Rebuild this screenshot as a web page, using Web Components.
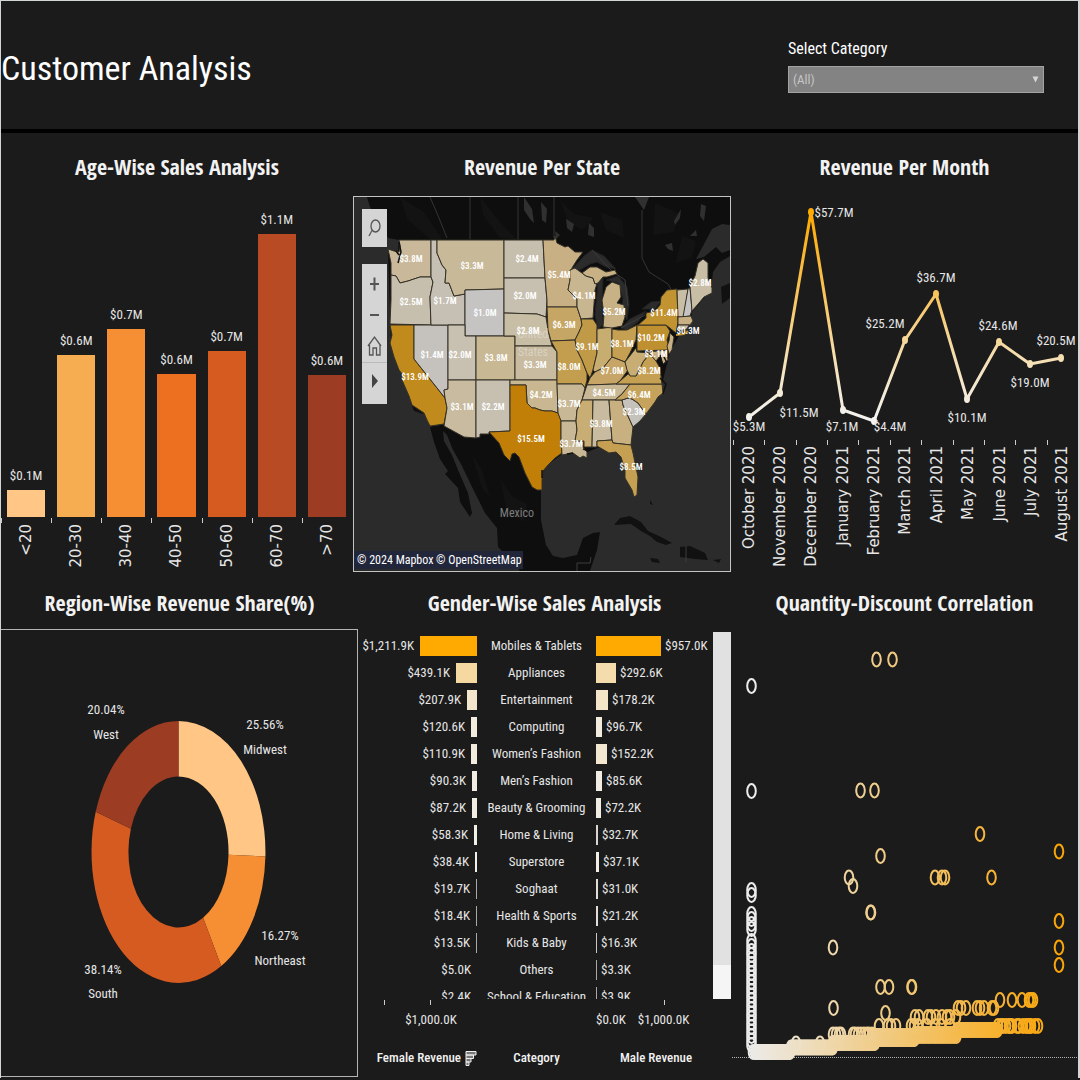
<!DOCTYPE html>
<html lang="en">
<head>
<meta charset="utf-8">
<title>Customer Analysis</title>
<style>
  body { margin: 0; background: #1b1b1b; color: #e6e6e6; font-family: "Roboto Condensed", Roboto, sans-serif; font-size: 13px; line-height: 18px; }
</style>
</head>
<body>
<customer-dashboard></customer-dashboard>

<script>
const SVG_OPEN = (box, label) => `<svg viewBox="${box}" role="img" aria-label="${label}">`;

class BaseElement extends HTMLElement {
  connectedCallback() {
    if (this.shadowRoot) return;
    this.attachShadow({ mode: 'open' }).innerHTML =
      `<style>:host{display:block;min-width:0}*{box-sizing:border-box}svg{display:block;width:100%;height:auto}text{font-size:13px;fill:#e6e6e6}</style>` + this.render();
  }
}

/* Title bar with the category filter */
class CategoryFilter extends BaseElement {
  render() {
    return `<style>
      :host{width:256px}
      label{display:block;font-size:16px;line-height:22px;color:#fff;margin-bottom:6px}
      .box{position:relative}
      select{appearance:none;display:block;width:100%;height:27px;padding:0 4px;border:1px solid #a3a3a3;border-radius:0;background:#838383;color:#c6c6c6;font:inherit}
      svg{position:absolute;right:5px;top:10px;width:7px;height:7px;pointer-events:none}
    </style>
    <label for="category">Select Category</label>
    <div class="box"><select id="category"><option>(All)</option></select>
    <svg viewBox="0 0 7 7" aria-hidden="true"><path d="M0.5 0.5h6L3.5 6.5z" fill="#d6d6d6"/></svg></div>`;
  }
}
class DashboardHeader extends BaseElement {
  render() {
    return `<style>
      :host{border-bottom:4px solid #000}
      header{display:flex;justify-content:space-between;align-items:flex-start;height:128px;padding:37px 34px 0 0}
      h1{margin:0;padding-top:5px;font-size:34px;line-height:50px;font-weight:400;color:#fff}
    </style><header><h1><slot></slot></h1><category-filter></category-filter></header>`;
  }
}

class ChartPanel extends BaseElement {
  render() {
    return `<style>
      :host{display:flex;flex-direction:column}
      h2{margin:0;display:flex;align-items:center;justify-content:center;height:var(--title-height,63px);padding-top:2px;font-family:"Open Sans Condensed","Open Sans",sans-serif;font-size:22px;line-height:28px;font-weight:500;color:#f2f2f2}
    </style><h2>${this.getAttribute('heading')}</h2><slot></slot>`;
  }
}

/* Row of upright category names under a chart */
class CategoryAxis extends BaseElement {
  render() {
    const names = this.getAttribute('names').split('|');
    return `<style>
      :host{display:flex}
      div{flex:1;display:flex;justify-content:center;position:relative;padding-top:6px;height:130px}
      div::before{content:"";position:absolute;left:0;top:0;height:5px;width:1px;background:#ccc}
      span{writing-mode:vertical-rl;transform:rotate(180deg);font-family:"DejaVu Sans",sans-serif;font-size:15px;line-height:18px;height:max-content;white-space:nowrap}
      :host([short]) div{height:54px}
    </style>` + names.map(n => `<div><span>${n.replace('<', '&lt;').replace('>', '&gt;')}</span></div>`).join('');
  }
}

class AgeBars extends BaseElement {
  render() {
    const bars = [['$0.1M', 27, '#ffc685'], ['$0.6M', 162, '#f6ad52'], ['$0.7M', 188, '#f68f33'], ['$0.6M', 143, '#ec7020'], ['$0.7M', 166, '#d55b21'], ['$1.1M', 283, '#b84a24'], ['$0.6M', 142, '#9c3c22']];
    return `<style>
      .plot{display:flex;height:321px;align-items:flex-end;padding-right:1px}
      .slot{flex:1;text-align:center}
      .bar{width:76%;margin:5px auto 0}
      category-axis{margin-top:1px;padding-right:1px}
    </style><div class="plot">` + bars.map(([t, h, c]) => `<div class="slot">${t}<div class="bar" style="height:${h}px;background:${c}"></div></div>`).join('') +
    `</div><category-axis short names="<20|20-30|30-40|40-50|50-60|60-70|>70"></category-axis>`;
  }
}

/* Map with state shading */
const STATES = [
  ['#c9b899', '399,240 431,240 431,277 420,277 408,281 400,283 396,276 391,275 391,263 388,249 394,251 399,252 400,246'],
  ['#c7bfae', '391,275 396,276 400,283 408,281 420,277 431,277 433,282 430,297 431,325 390,324 391,300'],
  ['#c08a1c', '390,325 414,325 414,359 445,398 447,408 444,424 430,426 427,420 424,413 412,405 409,396 402,380 402,374 399,370 394,357 390,343 392,335'],
  ['#c5c2bd', '414,325 448,325 448,389 444,390 445,398 414,359'],
  ['#c6c0b4', '431,240 437,240 437,253 442,265 446,270 445,283 449,283 454,296 465,294 465,325 431,325 430,297 433,282 431,277'],
  ['#c8b999', '437,240 504,240 504,289 465,290 465,294 454,296 449,283 445,283 446,270 442,265 437,253'],
  ['#c5c4c3', '465,290 504,289 504,336 465,336'],
  ['#c8c0b0', '448,325 465,325 465,336 476,336 476,380 448,380'],
  ['#c8b893', '476,336 515,336 515,380 476,380'],
  ['#c8bb9f', '448,380 476,380 476,438 464,437 444,426 447,408 445,398 444,390 448,389'],
  ['#c7c0b1', '476,380 510,380 510,431 489,432 489,434 480,434 480,437 476,438'],
  ['#c7bfad', '504,240 543,240 545,278 504,278'],
  ['#c7c0b1', '504,278 545,278 547,300 546,317 537,314 504,313'],
  ['#c8bda5', '504,313 537,314 546,317 548,330 552,346 515,346 515,336 504,336'],
  ['#c8bb9f', '515,346 552,346 557,352 557,380 515,380'],
  ['#c8b790', '510,380 557,380 558,413 552,411 545,411 540,410 535,408 532,408 527,403 526,385 510,385'],
  ['#c17f07', '510,385 526,385 527,403 532,408 535,408 540,410 545,411 552,411 558,413 561,420 561,437 562,453 555,458 548,465 543,471 542,480 542,490 537,490 532,487 525,473 519,457 515,453 512,454 510,461 504,455 499,443 489,432 510,431'],
  ['#c8b084', '543,240 554,240 555,236 557,243 565,247 568,246 575,252 583,252 577,260 572,268 570,280 568,290 577,299 577,307 547,307 547,300 545,278'],
  ['#c6a665', '547,307 577,307 581,319 582,325 579,332 575,340 551,341 548,330'],
  ['#c29e4e', '551,341 575,340 577,350 582,360 587,373 587,380 585,388 582,384 557,384 557,352'],
  ['#c8b896', '557,384 582,384 585,388 582,400 577,410 576,421 561,421 558,413'],
  ['#c8b896', '561,421 576,421 577,430 575,441 584,441 583,447 587,452 587,458 583,456 580,458 573,453 562,455 561,437'],
  ['#c8b691', '570,270 575,268 586,276 593,278 595,284 598,280 595,290 593,318 581,319 577,307 577,299 568,290 570,280'],
  ['#c19a48', '581,319 593,319 597,325 597,353 593,370 590,378 587,373 582,360 577,350 575,340 579,332 582,325'],
  ['#c8ad70', '597,329 612,327 612,357 603,368 595,372 593,370 597,353'],
  ['#c6a052', '612,329 618,330 627,330 637,325 636,340 630,353 625,362 612,357'],
  ['#c8b184', '603,327 604,315 602,300 606,287 612,282 620,285 621,297 617,303 624,305 625,317 622,326 612,328'],
  ['#c8b184', '582,273 590,267 597,267 606,272 615,270 617,274 607,277 603,277 598,283 595,284 593,278 586,276'],
  ['#c6a566', '587,385 590,378 595,372 603,368 612,357 625,362 628,370 620,381 616,384'],
  ['#c8b896', '587,385 616,384 630,384 622,394 615,400 582,400'],
  ['#c8ad74', '582,400 593,400 592,447 584,447 584,441 575,441 577,430 576,421 577,410'],
  ['#c8bba0', '593,400 609,400 612,440 597,441 597,447 592,447'],
  ['#c8b080', '609,400 622,400 623,405 633,427 631,445 613,443 612,440'],
  ['#c6a052', '597,441 612,440 613,443 631,445 633,453 638,477 637,495 634,497 632,490 625,478 625,470 621,457 616,452 609,453 597,446'],
  ['#c5c2bb', '622,400 628,398 632,399 638,403 646,414 640,421 633,427 623,405'],
  ['#c5a35d', '615,400 622,394 630,384 662,384 663,393 658,397 655,402 646,414 638,403 632,399 628,398 622,400'],
  ['#c6a052', '616,384 620,381 628,374 636,376 643,362 650,353 656,361 660,368 662,384'],
  ['#c8ad74', '625,362 636,348 637,352 650,353 643,362 636,376 630,376 627,370'],
  ['#c8b084', '648,352 667,350 668,360 663,364 660,356 656,361'],
  ['#bf902f', '637,325 666,325 670,331 667,340 669,347 667,350 637,351'],
  ['#c29331', '646,313 655,311 660,305 661,297 667,290 677,289 678,322 676,333 666,325 638,325 646,318'],
  ['#c8b084', '670,333 674,337 672,350 669,354 667,346 669,341'],
  ['#c8bda5', '677,290 688,289 684,317 678,317'],
  ['#c5c4c3', '688,289 690,288 692,310 690,316 683,317'],
  ['#c8b084', '678,317 691,316 693,321 690,325 678,325'],
  ['#c8bda5', '678,325 689,325 687,329 678,331'],
  ['#c8bda5', '690,286 695,276 698,263 703,259 708,263 708,278 712,288 712,293 704,297 699,303 692,311']
];
const MAP_LABELS = [['$3.8M',411,259],['$3.3M',472,266],['$2.4M',527,259],['$5.4M',559,275],['$2.8M',700,283],['$2.5M',411,302],['$1.7M',445,301],['$2.0M',525,296],['$4.1M',584,296],['$1.0M',485,313],['$5.2M',614,312],['$11.4M',664,313],['$2.8M',528,331],['$6.3M',564,325],['$10.2M',651,338],['$0.3M',688,331],['$1.4M',432,355],['$2.0M',460,355],['$3.8M',496,358],['$9.1M',587,347],['$8.1M',622,344],['$3.1M',656,354],['$3.3M',535,365],['$8.0M',569,367],['$7.0M',612,371],['$8.2M',649,371],['$13.9M',415,377],['$4.2M',541,395],['$4.5M',604,393],['$6.4M',639,395],['$3.7M',569,404],['$2.3M',634,412],['$3.1M',462,407],['$2.2M',493,407],['$3.8M',601,424],['$15.5M',531,439],['$3.7M',571,444],['$8.5M',631,467]];
class MapControls extends BaseElement {
  render() {
    return `<style>
      :host{display:flex;flex-direction:column;gap:17px;width:25px}
      div{display:flex;flex-direction:column;background:#d5d5d5}
      button{border:0;padding:0;background:#d5d5d5;width:25px;height:30px;display:grid;place-items:center}
      .search{height:38px}.tools{padding:5px 0;height:140px;justify-content:space-between}.play{border-top:1px solid #bbb;height:37px}
      svg{width:19px;height:22px;fill:none;stroke:#555;stroke-width:1.3}
    </style>
    <button class="search" aria-label="Search"><svg viewBox="0 0 19 22"><ellipse cx="10.5" cy="9" rx="4.5" ry="6"/><path d="M7 13.5L4 19"/></svg></button>
    <div class="tools">
      <button aria-label="Zoom in"><svg viewBox="0 0 19 22"><path d="M9.5 4.500v13M5 11h9" stroke-width="2"/></svg></button>
      <button aria-label="Zoom out"><svg viewBox="0 0 19 22"><path d="M5 11h9" stroke-width="2"/></svg></button>
      <button aria-label="Home"><svg viewBox="0 0 19 22"><path d="M3 11L9.500 2l6.500 9M4.500 10v10h3.500v-7h3.500v7h3.500V10"/></svg></button>
      <button class="play" aria-label="More tools"><svg viewBox="0 0 19 22"><path d="M7 4v14l6-7z" fill="#444" stroke="none"/></svg></button>
    </div>`;
  }
}
class RevenueMap extends BaseElement {
  render() {
    return `<style>
      :host{position:relative;border:1px solid #c4c4c4}
      .l text{font-size:9px;font-weight:600;fill:#fff;text-anchor:middle}
      .place{font-size:12px;fill:#d9d2c3}.credit{font-size:12px;fill:#fff}
      map-controls{position:absolute;left:8px;top:12px}
    </style>` + SVG_OPEN('354 197 376 374', 'Revenue per state') + `
      <rect x="354" y="197" width="376" height="374" fill="#2b2b2b"/>
      <path fill="#0e0e0e" d="M367 197H730V225L722 224L712 229L703 246L696 259L704 257L716 247L722 253L730 250V256L720 262L713 272L711 290L692 312L691 320L680 334L670 352L662 384L645 414L633 428L631 446L600 447L587 452L561 455L546 466L541 478L541 520L546 545L553 556L563 558L577 555L583 538L593 533L600 532L597 550L590 571H520L508 557L498 547L497 528L485 513L474 491L461 464L453 450L447 435L443 431L444 441L452 455L458 470L468 493L472 513L470 517L460 502L458 488L445 474L448 471L440 459L434 442L430 427L445 424L425 405L391 343L388 250L398 251L399 240L388 238L382 225L370 207Z"/>
      <g fill="#131313"><path d="M400 197L424 212L442 239L430 239L407 219ZM480 197L500 222L516 239L500 238L483 215ZM560 200l14 14 20 4-12 12-14-8zM600 212l22 8 2 18-18-8zM655 203l24 10-5 19-21 3zM682 236l14 5-4 17-16 5zM472 455l10 15 8 27-8-9zM500 478l12 18 15 8-3 18-17-10z"/></g>
      <g fill="#303030"><path d="M524 197l8 12 2 14-4-4-6-9zM541 202l6 7-1 14-4-3zM566 219l8 5-2 8-5-4zM589 223l5 5v9l-6-2zM674 221l7-12-1 9-5 7zM701 204l5 2-2 15-4-5zM690 236l6-6 1 6zM665 245l7-2 1 8-5-2zM635 197h14l-5 13zM555 231l5 4-4 4z"/></g>
      <path fill="none" stroke="#343434" d="M470 197V239M518 197V239M430 197L439 218L447 238M554 197V238M642 210V258L649 272L668 284L672 291M728 197l-10-4"/>
      <path fill="#2b2b2b" stroke="#222" d="M572 269L584 256L592 250L604 256L616 269L606 267L597 262L590 264L580 270ZM598 282L603 278L602 300L603 325L598 329L595 315ZM606 280L618 276L627 287L629 304L627 320L622 310L623 298L618 283ZM621 328L630 319L646 311L638 322L627 330ZM642 309L651 302L661 301L655 309Z"/>
      <path fill="none" stroke="#3d3d3d" d="M592 250L612 271L625 280L628 306M621 328L645 315"/>
      <path fill="#111" d="M614 525L620 518L630 516L641 522L648 531L661 537L672 543L666 545L657 542L650 536L641 531L631 524ZM680 547l10-1 15 7 3 7-13-1-15-2zM650 558l8 1 2 4-8-1zM713 560l8-1-2 4zM650 500l3 5-3-1zM721 287l9-4v15l-8 6zM412 406l10 3 1 5-9-3z"/>
      <path fill="none" stroke="#3d3d3d" d="M686 546v16M577 571v-8h13l1-6"/>
      <g stroke="#353126" stroke-width="1" stroke-linejoin="round">` +
      STATES.map(([c, p]) => `<polygon fill="${c}" points="${p}"/>`).join('') + `
        <path d="M676 335L684 334L688 331" fill="none" stroke="#c29331" stroke-width="2"/>
        <path d="M399 242l2 10-3 11M399 255l-3-4M660 355l2 8 1 9M664 357l3 6M660 378l6 6-3 10M583 449l6 2M567 454l6-1M542 470v8" fill="none" stroke="#111" stroke-width="1.500"/>
      </g>
      <g text-anchor="middle"><text class="place" x="533" y="338">United</text><text class="place" x="533" y="356">States</text>
      <text class="place" x="517" y="517" style="fill:#7e7e7e">Mexico</text></g>
      <g class="l">` + MAP_LABELS.map(([t, x, y]) => `<text x="${x}" y="${y + 3}">${t}</text>`).join('') + `</g>
      <rect x="354" y="551" width="169" height="18" fill="#22263a"/>
      <text class="credit" x="357" y="564">© 2024 Mapbox</text><text class="credit" x="436" y="564">© OpenStreetMap</text>
    </svg><map-controls></map-controls>`;
  }
}

class MonthLine extends BaseElement {
  render() {
    const ys = [417, 393, 212, 410, 421, 340, 294, 399, 342, 364, 358];
    const pts = ys.map((y, i) => [Math.round(749 + i * 31.2), y]);
    const labels = [['$5.3M', 749, 431], ['$11.5M', 799, 417], ['$57.7M', 834, 217], ['$7.1M', 842, 431], ['$4.4M', 890, 431], ['$25.2M', 885, 328], ['$36.7M', 936, 282], ['$10.1M', 967, 422], ['$24.6M', 998, 330], ['$19.0M', 1030, 387], ['$20.5M', 1056, 345]];
    return `<style>category-axis{padding-left:2px}</style>` + SVG_OPEN('731 196 347 244', 'Revenue per month') + `
      <defs><linearGradient id="g" gradientUnits="userSpaceOnUse" x1="0" y1="421" x2="0" y2="212"><stop offset="0" stop-color="#f3f3f3"/><stop offset=".3" stop-color="#f5dfb2"/><stop offset=".6" stop-color="#f8c45e"/><stop offset="1" stop-color="#ffaa00"/></linearGradient></defs>
      <polyline fill="none" stroke="url(#g)" stroke-width="3" stroke-linejoin="round" points="${pts.join(' ')}"/>
      <path fill="url(#g)" d="${pts.map(([x, y]) => `M${x - 3} ${y}a3 4 0 1 0 6 0a3 4 0 1 0 -6 0`).join('')}"/>
      <g text-anchor="middle">` + labels.map(([t, x, y]) => `<text x="${x}" y="${y}">${t}</text>`).join('') + `</g></svg>
    <category-axis names="October 2020|November 2020|December 2020|January 2021|February 2021|March 2021|April 2021|May 2021|June 2021|July 2021|August 2021"></category-axis>`;
  }
}

class RegionDonut extends BaseElement {
  render() {
    const parts = [[25.56, '#ffc685'], [16.27, '#f68f33'], [38.14, '#d55b21'], [20.04, '#9c3c22']];
    let sum = 0;
    const at = (s, rx, ry) => { const a = s / 100 * 2 * Math.PI; return `${(178.5 + rx * Math.sin(a)).toFixed(1)} ${(852 - ry * Math.cos(a)).toFixed(1)}`; };
    const arcs = parts.map(([v, c]) => { const a = sum, b = Math.min(100, sum += v);
      return `<path fill="${c}" d="M${at(a, 87, 131)}A87 131 0 0 1 ${at(b, 87, 131)}L${at(b, 50, 75.5)}A50 75.5 0 0 0 ${at(a, 50, 75.5)}Z"/>`; }).join('');
    const labels = [['20.04%', 106, 714], ['West', 106, 739], ['25.56%', 265, 729], ['Midwest', 265, 754], ['16.27%', 280, 940], ['Northeast', 280, 965], ['38.14%', 103, 974], ['South', 103, 998]];
    return `<style>:host{border:1px solid #b5b5b5;border-left:0}</style>` + SVG_OPEN('1 630 356 446', 'Revenue share by region') + arcs +
      `<g text-anchor="middle">` + labels.map(([t, x, y]) => `<text x="${x}" y="${y}">${t}</text>`).join('') + `</g></svg>`;
  }
}

/* Two-sided bars by product category */
class GenderTable extends BaseElement {
  render() {
    const rows = [['$1,211.9K', 57, '#ffaa00', 'Mobiles &amp; Tablets', 65, '$957.0K', '#ffaa00'], ['$439.1K', 21, '#f5d9a0', 'Appliances', 20, '$292.6K', '#f5dcac'], ['$207.9K', 10, '#f3e6cb', 'Entertainment', 12, '$178.2K', '#f3e5c8'], ['$120.6K', 6, '#f2ecde', 'Computing', 6, '$96.7K', '#f2ecde'], ['$110.9K', 6, '#f2ecde', 'Women’s Fashion', 11, '$152.2K', '#f3e7cf'], ['$90.3K', 5, '#f2ede2', 'Men’s Fashion', 6, '$85.6K', '#f2ede2'], ['$87.2K', 5, '#f2ede2', 'Beauty &amp; Grooming', 5, '$72.2K', '#f2ede2'], ['$58.3K', 3, '#f2efe8', 'Home &amp; Living', 2, '$32.7K', '#d8d6d0'], ['$38.4K', 2, '#f2efe8', 'Superstore', 3, '$37.1K', '#f2efe8'], ['$19.7K', 1, '#a8a8a8', 'Soghaat', 2, '$31.0K', '#e0ded8'], ['$18.4K', 1, '#a8a8a8', 'Health &amp; Sports', 2, '$21.2K', '#e0ded8'], ['$13.5K', 1, '#a8a8a8', 'Kids &amp; Baby', 1, '$16.3K', '#c8c8c8'], ['$5.0K', 0, '#aaa', 'Others', 1, '$3.3K', '#a8a8a8'], ['$2.4K', 0, '#aaa', 'School &amp; Education', 1, '$3.9K', '#a8a8a8']];
    return `<style>
      :host{padding-top:3px}
      .scroll{display:flex;height:367px;overflow:hidden;align-items:flex-start}
      table{width:100%;border-collapse:collapse;table-layout:fixed}
      td,th{height:27px;padding:0;font-weight:400;line-height:20px;white-space:nowrap}
      col.f,col.c{width:119px}
      .row{display:flex;align-items:center;gap:4px}
      .left{justify-content:flex-end;gap:6px}
      i{display:block;height:20px}
      .bar{flex:none;width:18px;height:367px;background:#e1e1e1;display:flex;align-items:flex-end}
      .bar::after{content:"";width:100%;height:34px;background:#f5f5f5}
      .ticks{display:grid;grid-template-columns:46px 185px 1fr;height:11px;padding:1px 0 0 26px}
      .ticks b{width:1px;height:5px;background:#ccc}
      .ticks b:last-child{margin-left:49px}
      .axis,.names{display:grid;grid-template-columns:119px 119px 1fr;text-align:center}
      .axis span:first-child{padding-left:27px}
      .axis{line-height:20px}
      .axis .zero{display:flex;gap:12px}.zero span:first-child{padding:0}
      .names{line-height:20px;margin-top:18px;color:#f2f2f2;font-weight:500}
      .names .f{display:flex;justify-content:flex-end;gap:4px;align-items:center}
      .names .m{text-align:left;padding-left:24px}
      svg{width:12px;height:15px}
    </style>
    <div class="scroll"><table aria-label="Revenue by category and gender"><colgroup><col class="f"><col class="c"><col></colgroup><tbody>` +
      rows.map(([f, fw, fc, n, mw, m, mc]) => `<tr><td><div class="row left">${f}<i style="width:${fw}px;background:${fc}"></i></div></td><th scope="row">${n}</th><td><div class="row"><i style="width:${mw}px;background:${mc}"></i>${m}</div></td></tr>`).join('') +
    `</tbody></table><div class="bar"></div></div>
    <div class="ticks"><b></b><b></b><b></b></div>
    <div class="axis"><span>$1,000.0K</span><span></span><div class="zero"><span>$0.0K</span><span>$1,000.0K</span></div></div>
    <div class="names"><span class="f">Female Revenue<svg viewBox="0 0 12 15" aria-hidden="true"><path d="M1 0.500H11V4H1ZM1 4H8.500V7.500H1ZM1 7.500H6V11H1ZM1 11H4V14.500H1Z" fill="#777" stroke="#eee"/></svg></span><span>Category</span><span class="m">Male Revenue</span></div>`;
  }
}

class DiscountScatter extends BaseElement {
  render() {
    const p = [];
    const run = (x0, x1, y, step) => { for (let x = x0; x <= x1; x += step) p.push([x, y]); };
    const list = (y, ...xs) => xs.forEach(x => p.push([x, y]));
    for (const y of [686, 791, 890, 895, 914, 919, 924, 929, 941, 946, 951]) p.push([751.5, y]);
    for (let y = 955; y < 1048; y += 4.5) p.push([751.5, y]);
    list(1052, 753, 755);
    run(756, 791, 1052, 1.1);
    run(791, 833, 1047.5, 1.1); run(833, 875, 1043, 1.1); run(875, 915, 1039, 1.1); run(872, 915, 1036, 1.7);
    run(915, 957, 1034, 1.7); run(915, 957, 1036, 2.3); run(957, 998, 1030, 1.5);
    list(1026, 998, 1001, 1003, 1006, 1009, 1010, 1012, 1017, 1019, 1023, 1026, 1028, 1030, 1031, 1035, 1038);
    list(1043.5, 796, 820);
    list(1034.5, 833, 836, 839, 841, 853, 855, 858, 861, 864, 867, 869, 872);
    list(1026, 879, 888, 891, 896, 911, 914, 918, 927, 935, 941, 950);
    list(1017, 915, 919, 928, 931, 936, 942, 947, 950, 956);
    list(1008, 833.5, 958, 961, 966, 977, 980, 984, 992, 994);
    list(1000, 1000, 1012, 1022, 1029, 1031, 1033);
    list(1013, 885.5); list(987, 880.5, 889, 911.5, 912); list(947.5, 833);
    list(912.5, 870.5, 871); list(886, 853); list(877.5, 849, 935, 942, 945, 991.5);
    list(856, 880.5); list(834, 980); list(790.5, 860.5, 874.5); list(659.5, 876.5, 892.5);
    list(851.5, 1059); list(921, 1059); list(947.5, 1059); list(965, 1059);
    const mix = (a, b, t) => a.map((v, i) => Math.round(v + (b[i] - v) * t));
    const tone = x => { const t = (x - 751) / 300; const s = [[236, 236, 236], [240, 205, 138], [250, 166, 10]];
      return `rgb(${t < .42 ? mix(s[0], s[1], Math.max(0, t) / .42) : mix(s[1], s[2], Math.min(1, (t - .42) / .58))})`; };
    return SVG_OPEN('731 629 347 449', 'Quantity against discount') +
      `<path d="M732 1057.500H1078" stroke="#b5b5b5" stroke-dasharray="1 1"/><g fill="none" stroke-width="2">` +
      p.map(([x, y]) => `<ellipse cx="${x}" cy="${y}" rx="4.300" ry="6.900" stroke="${tone(x)}"/>`).join('') + `</g></svg>`;
  }
}

class CustomerDashboard extends BaseElement {
  render() {
    return `<style>
      :host{border:1px solid #d2d6d6;border-right-width:2px;border-bottom:0}
      .row{display:grid;align-items:start}
      .top{grid-template-columns:352fr 378fr 347fr;height:440px}
      .low{grid-template-columns:357fr 373fr 347fr;--title-height:56px}
    </style>
    <dashboard-header>Customer Analysis</dashboard-header>
    <main>
      <div class="row top">
        <chart-panel heading="Age-Wise Sales Analysis"><age-bars></age-bars></chart-panel>
        <chart-panel heading="Revenue Per State"><revenue-map></revenue-map></chart-panel>
        <chart-panel heading="Revenue Per Month"><month-line></month-line></chart-panel>
      </div>
      <div class="row low">
        <chart-panel heading="Region-Wise Revenue Share(%)"><region-donut></region-donut></chart-panel>
        <chart-panel heading="Gender-Wise Sales Analysis"><gender-table></gender-table></chart-panel>
        <chart-panel heading="Quantity-Discount Correlation"><discount-scatter></discount-scatter></chart-panel>
      </div>
    </main>`;
  }
}

Object.entries({
  'category-filter': CategoryFilter, 'dashboard-header': DashboardHeader, 'chart-panel': ChartPanel, 'category-axis': CategoryAxis,
  'age-bars': AgeBars, 'map-controls': MapControls, 'revenue-map': RevenueMap, 'month-line': MonthLine, 'region-donut': RegionDonut,
  'gender-table': GenderTable, 'discount-scatter': DiscountScatter, 'customer-dashboard': CustomerDashboard
}).forEach(([name, cls]) => customElements.define(name, cls));
</script>
</body>
</html>
